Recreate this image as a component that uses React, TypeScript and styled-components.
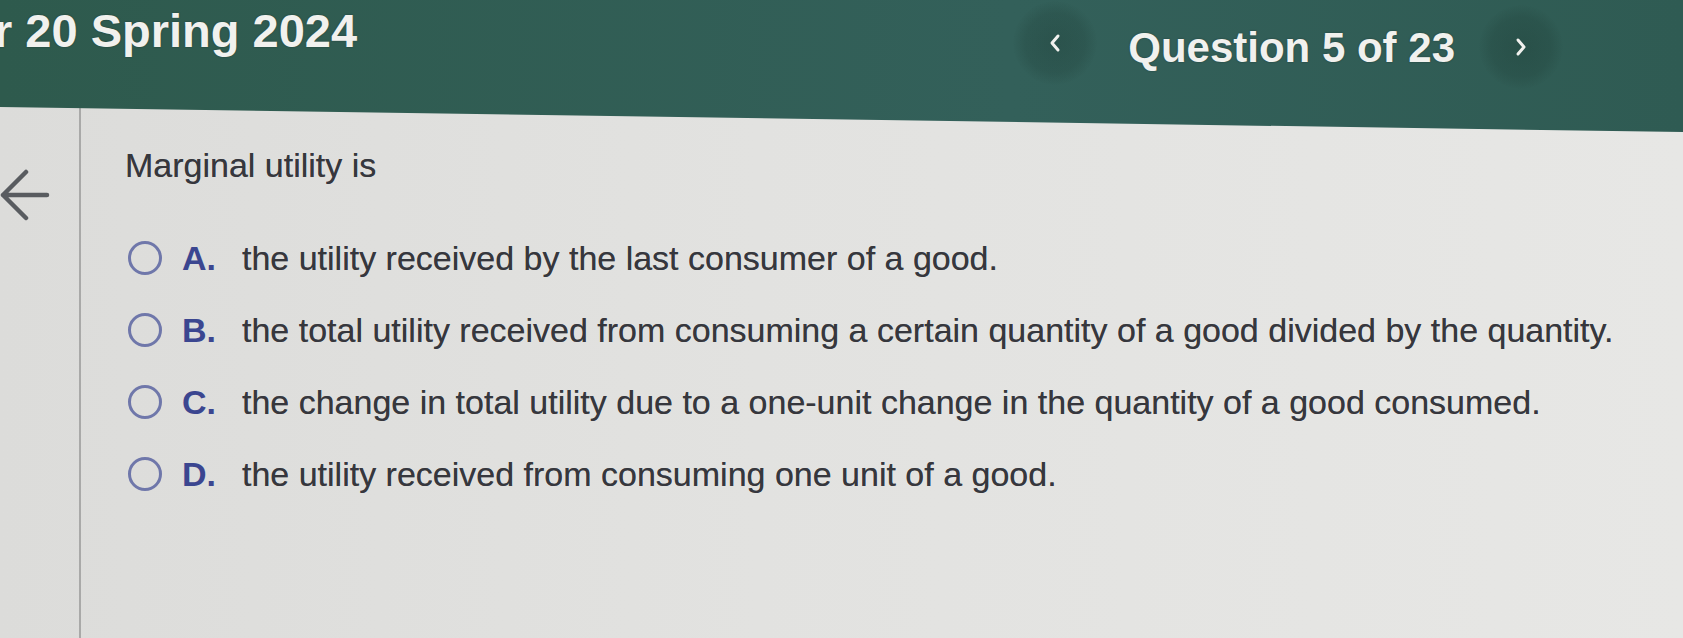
import * as React from 'react'
import styled, { createGlobalStyle } from 'styled-components'

interface IChoice {
  letter: string
  text: string
}

const choices: IChoice[] = [
  { letter: 'A', text: 'the utility received by the last consumer of a good.' },
  {
    letter: 'B',
    text: 'the total utility received from consuming a certain quantity of a good divided by the quantity.'
  },
  {
    letter: 'C',
    text: 'the change in total utility due to a one-unit change in the quantity of a good consumed.'
  },
  { letter: 'D', text: 'the utility received from consuming one unit of a good.' }
]

const GlobalStyle = createGlobalStyle`
  html, body {
    margin: 0;
    padding: 0;
    overflow: hidden;
    background: #e2e2e0;
  }
  * {
    box-sizing: border-box;
  }
`

const Page = styled.div`
  width: 1683px;
  height: 638px;
  display: flex;
  flex-direction: column;
  font-family: 'Liberation Sans', Arial, Helvetica, sans-serif;
  background: linear-gradient(90deg, #dcdcda 0%, #e2e2e0 45%, #e7e7e5 100%);
  overflow: hidden;
`

const Header = styled.header`
  position: relative;
  height: 107px;
  flex-shrink: 0;
  display: flex;
  align-items: flex-start;
  justify-content: space-between;
  background: linear-gradient(90deg, #2e5a4d 0%, #33605a 60%, #2f5b53 100%);
  color: #f1f1ee;
  z-index: 1;

  /* the photo shows the bar slanting down to the right */
  &::after {
    content: '';
    position: absolute;
    left: 0;
    top: 100%;
    width: 100%;
    height: 25px;
    background: linear-gradient(90deg, #2e5a4d 0%, #33605a 60%, #2f5b53 100%);
    clip-path: polygon(0 0, 100% 0, 100% 100%, 0 0);
  }
`

const CourseTitle = styled.h1`
  margin: 7px 0 0 -6px;
  font-size: 47px;
  line-height: 1;
  font-weight: 700;
  white-space: nowrap;
  text-shadow: 0 0 2px rgba(0, 0, 0, 0.35);
`

const Nav = styled.nav`
  display: flex;
  align-items: center;
  margin: 0 120px 0 0;
`

const NavButton = styled.button<{ side: 'left' | 'right' }>`
  width: 84px;
  height: 84px;
  border: 0;
  padding: 0;
  border-radius: 50%;
  display: flex;
  align-items: center;
  justify-content: center;
  color: #f1f1ee;
  margin-top: ${({ side }) => (side === 'left' ? '-4px' : '5px')};
  margin-left: ${({ side }) => (side === 'left' ? '0' : '-2px')};
  background: radial-gradient(
    circle,
    rgba(20, 45, 38, 0.26) 0%,
    rgba(20, 45, 38, 0.17) 50%,
    rgba(20, 45, 38, 0) 72%
  );
  cursor: pointer;
`

const QuestionCount = styled.div`
  font-size: 42px;
  line-height: 1;
  font-weight: 700;
  white-space: nowrap;
  padding-top: 7px;
  margin: 0 26px 0 31px;
  text-shadow: 0 0 2px rgba(0, 0, 0, 0.35);
`

const Body = styled.div`
  flex: 1;
  display: flex;
`

const Rail = styled.aside`
  width: 81px;
  flex-shrink: 0;
  border-right: 2px solid #a9a9a8;
  padding-top: 61px;
`

const Main = styled.main`
  flex: 1;
  padding: 41px 0 0 44px;
  color: #36373d;
`

const Prompt = styled.div`
  font-size: 34px;
  line-height: 1;
  margin-bottom: 40px;
  text-shadow: 0 0 0.6px rgba(40, 40, 46, 0.6);
`

const Choices = styled.ul`
  list-style: none;
  margin: 0;
  padding: 0;
`

const ChoiceRow = styled.li`
  height: 72px;
  display: flex;
  align-items: center;
  font-size: 34px;
  white-space: nowrap;
`

const Radio = styled.span`
  width: 34px;
  height: 34px;
  margin-left: 3px;
  margin-right: 20px;
  border: 3px solid #6f77aa;
  border-radius: 50%;
  flex-shrink: 0;
`

const Letter = styled.span`
  width: 60px;
  font-weight: 700;
  color: #3b4690;
`

const ChoiceText = styled.span`
  color: #36373d;
  text-shadow: 0 0 0.6px rgba(40, 40, 46, 0.6);
`

function ChevronIcon({ dir }: { dir: 'left' | 'right' }) {
  return (
    <svg width="14" height="20" viewBox="0 0 14 20" fill="none">
      <path
        d={dir === 'left' ? 'M10 3 L4 10 L10 17' : 'M4 3 L10 10 L4 17'}
        stroke="currentColor"
        strokeWidth="3"
        strokeLinecap="round"
        strokeLinejoin="round"
      />
    </svg>
  )
}

function BackArrow() {
  return (
    <svg width="50" height="56" viewBox="0 0 50 56" fill="none">
      <path
        d="M3 27 L47 27 M26 4 L3 27 L26 50"
        stroke="#595c60"
        strokeWidth="4.5"
        strokeLinecap="round"
        strokeLinejoin="round"
      />
    </svg>
  )
}

export default function App() {
  return (
    <>
      <GlobalStyle />
      <Page>
        <Header>
          <CourseTitle>r 20 Spring 2024</CourseTitle>
          <Nav>
            <NavButton side="left" aria-label="Previous question">
              <ChevronIcon dir="left" />
            </NavButton>
            <QuestionCount>Question 5 of 23</QuestionCount>
            <NavButton side="right" aria-label="Next question">
              <ChevronIcon dir="right" />
            </NavButton>
          </Nav>
        </Header>
        <Body>
          <Rail>
            <BackArrow />
          </Rail>
          <Main>
            <Prompt>Marginal utility is</Prompt>
            <Choices>
              {choices.map(choice => (
                <ChoiceRow key={choice.letter}>
                  <Radio />
                  <Letter>{choice.letter}.</Letter>
                  <ChoiceText>{choice.text}</ChoiceText>
                </ChoiceRow>
              ))}
            </Choices>
          </Main>
        </Body>
      </Page>
    </>
  )
}
